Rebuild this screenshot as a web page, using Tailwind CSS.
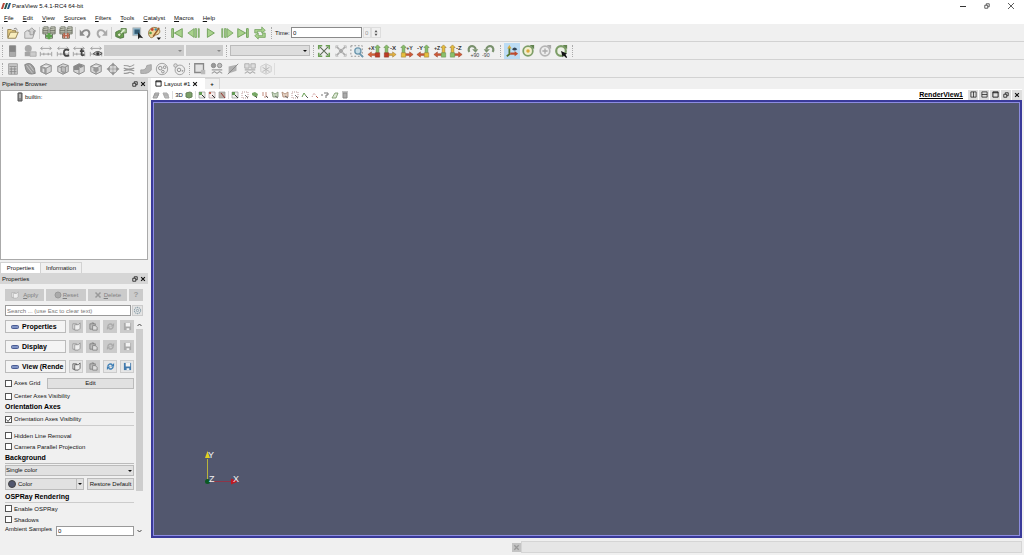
<!DOCTYPE html>
<html lang="en">
<head>
<meta charset="utf-8">
<title>ParaView 5.4.1-RC4 64-bit</title>
<script src="https://cdn.jsdelivr.net/npm/@tailwindcss/browser@4"></script>
</head>
<body class="flex h-screen flex-col overflow-hidden bg-[#f0f0f0] font-['Liberation_Sans',sans-serif] text-[6px] leading-[10px] text-[#111]">

<svg class="hidden" aria-hidden="true">
  <defs>
    <symbol id="open" viewBox="0 0 16 16"><path d="M2 4h4l1 1h4v8H2z" fill="#e8cf86" stroke="#8d7a4b"/><path d="M2 14l3-7h9l-3 7z" fill="#f8edbd" stroke="#8d7a4b"/><path d="M9 3q3-2 4 2" fill="none" stroke="#888"/></symbol>
    <symbol id="save" viewBox="0 0 16 16"><path d="M2 7l3-2h9l-3 9H2z" fill="#ddd" stroke="#999"/><path d="M6 6l4-4 4 4h-2v4H8V6z" fill="#d0d0d0" stroke="#999"/></symbol>
    <symbol id="server" viewBox="0 0 16 16"><g fill="#d2d6c6" stroke="#65695c"><path d="M1 3h6v6H1zM9 3h6v6H9z"/><path d="M1 5h6M1 7h6M9 5h6M9 7h6M1 2l1-1h5v2M9 2l1-1h5v2"/><path d="M4 9v5h8V9" fill="none"/></g></symbol>
    <symbol id="connect" viewBox="0 0 16 16"><use href="#server"/><path d="M8 8v7M4.500 11.500h7" stroke="#5da34c" stroke-width="3"/></symbol>
    <symbol id="disconnect" viewBox="0 0 16 16"><use href="#server"/><path d="M5 8h2v6H5zM9 8h2v6H9zM4 10h8v2H4z" fill="#b9664e"/></symbol>
    <symbol id="undo" viewBox="0 0 16 16"><path d="M4 8.500C7 3 13 4 13 8.500q0 3-3 4.500" fill="none" stroke="#8c8c8c" stroke-width="2.200"/><path d="M2 4v7h6z" fill="#8c8c8c"/></symbol>
    <symbol id="redo" viewBox="0 0 16 16"><path d="M12 8.500C9 3 3 4 3 8.500q0 3 3 4.500" fill="none" stroke="#aaa" stroke-width="2.200"/><path d="M14 4v7H8z" fill="#aaa"/></symbol>
    <symbol id="find" viewBox="0 0 16 16"><path d="M2 7l4-2 5 2v6l-4 1-5-2z" fill="#6ba24f" stroke="#496f3b"/><path d="M8 3h6v5H8z" fill="#a6c990" stroke="#557c43"/><path d="M6 10l6-6" stroke="#e6f2dc" stroke-width="1.500"/><circle cx="6" cy="10" r="2" fill="#e5efcf" stroke="#557c43"/></symbol>
    <symbol id="box" viewBox="0 0 16 16"><path d="M2 2h9v9H2z" fill="#8fb4c8" stroke="#bbb"/><path d="M4 4h6v5H4z" fill="#315a73"/><path d="M8 7l6 7-4-1-2 2z" fill="#222"/></symbol>
    <symbol id="palette" viewBox="0 0 16 16"><path d="M13 3C5-2-1 7 3 12c3 4 5-2 8-2 5-1 4-6 2-7z" fill="#f0d69a" stroke="#8b6c39"/><circle cx="6" cy="4" r="1.600" fill="#c54832"/><circle cx="10" cy="4" r="1.400" fill="#438cab"/><circle cx="4" cy="8" r="1.500" fill="#5a9b48"/><path d="M14 2L7 12" stroke="#955b2c" stroke-width="1.500"/><path d="M11 13h5l-2.500 3z" fill="#111"/></symbol>
    <symbol id="first" viewBox="0 0 16 16"><path d="M2 3h2v10H2zM14 3v10L5 8z" fill="#a9d28d" stroke="#6a9c54"/></symbol>
    <symbol id="prev" viewBox="0 0 16 16"><path d="M8 3v10L1 8zM9 3h2v10H9zM13 3h1v10h-1z" fill="#a9d28d" stroke="#6a9c54" stroke-width=".8"/></symbol>
    <symbol id="play" viewBox="0 0 16 16"><path d="M5 3l8 5-8 5z" fill="#a9d28d" stroke="#6a9c54"/></symbol>
    <symbol id="next" viewBox="0 0 16 16"><path d="M8 3v10l7-5zM5 3h2v10H5zM2 3h1v10H2z" fill="#a9d28d" stroke="#6a9c54" stroke-width=".8"/></symbol>
    <symbol id="last" viewBox="0 0 16 16"><path d="M12 3h2v10h-2zM2 3v10l9-5z" fill="#a9d28d" stroke="#6a9c54"/></symbol>
    <symbol id="loop" viewBox="0 0 16 16"><path d="M2 8V4h8V1l4 4-4 3V6H5v2zM14 8v5H6v2l-4-4 4-3v3h5V8z" fill="#a9d28d" stroke="#6a9c54" stroke-width=".8"/></symbol>

    <symbol id="legend" viewBox="0 0 16 16"><path d="M4 2h7v12H4z" fill="#858585" stroke="#8a8a8a"/><path d="M4 9h7v5H4z" fill="#aaa"/></symbol>
    <symbol id="shapes" viewBox="0 0 16 16"><circle cx="6" cy="5" r="4" fill="#aaa"/><path d="M2 9h7v5H2z" fill="#a4a4a4"/><path d="M8 9h7v5H8z" fill="#ccc" stroke="#aaa"/></symbol>
    <symbol id="range" viewBox="0 0 16 16"><path d="M2 5h12M4 3L2 5l2 2M12 3l2 2-2 2M1.500 9v5M14.500 9v5M2 11.500h12M5.500 10v3M10.500 10v3" fill="none" stroke="#999"/></symbol>
    <symbol id="range-c" viewBox="0 0 16 16"><use href="#range"/><path d="M15 7q-6-2-6 3t6 3" fill="none" stroke="#444" stroke-width="2"/></symbol>
    <symbol id="range-t" viewBox="0 0 16 16"><use href="#range"/><path d="M11 5v7q1 2 3 0M9 8h5" fill="none" stroke="#444" stroke-width="2"/></symbol>
    <symbol id="range-v" viewBox="0 0 16 16"><use href="#range"/><path d="M5 11q5-5 10 0-5 4-10 0z" fill="#bbb" stroke="#444"/><circle cx="10" cy="11" r="1.700" fill="#333"/></symbol>
    <symbol id="reset" viewBox="0 0 16 16"><path d="M3 3l10 10M13 3L3 13" stroke="#5e6b58" stroke-width="1.200"/><path d="M2 6V2h4M10 2h4v4M14 10v4h-4M6 14H2v-4" fill="none" stroke="#6ca055" stroke-width="1.800"/></symbol>
    <symbol id="zoomdata" viewBox="0 0 16 16"><path d="M3 3l3 3M13 3l-3 3M3 13l3-3M13 13l-3-3" stroke="#aaa" stroke-width="2"/><circle cx="8" cy="8" r="2.500" fill="#aaa"/><path d="M2 5V2h3M11 2h3v3M2 11v3h3M14 11v3h-3" fill="none" stroke="#bbb"/></symbol>
    <symbol id="zoombox" viewBox="0 0 16 16"><path d="M1 2h13v12H1z" fill="none" stroke="#888" stroke-dasharray="2 2"/><circle cx="9" cy="8" r="3.500" fill="#c6dce6" stroke="#6d97ae" stroke-width="1.500"/><path d="M11 11l4 4" stroke="#6d97ae" stroke-width="2"/></symbol>
    <symbol id="axis-r" viewBox="0 0 16 16"><path d="M12 1l3 3h-1.500v6h-3V4H9z" fill="#8ac06a" stroke="#638b4d" stroke-width=".7"/><path d="M10 11H5V9l-4 3 4 3v-2h5z" fill="#d8663b" stroke="#a5482a" stroke-width=".6"/><path d="M9.500 10h5v5h-5z" fill="#bd3c26" stroke="#8d3520" stroke-width=".6"/></symbol>
    <symbol id="axis-l" viewBox="0 0 16 16"><path d="M4 1l3 3H5.500v6h-3V4H1z" fill="#8ac06a" stroke="#638b4d" stroke-width=".7"/><path d="M6 11h5V9l4 3-4 3v-2H6z" fill="#e3b03d" stroke="#9d7833" stroke-width=".6"/><path d="M1.500 10h5v5h-5z" fill="#bd3c26" stroke="#8d3520" stroke-width=".6"/></symbol>
    <symbol id="axis-ly" viewBox="0 0 16 16"><path d="M4 1l3 3H5.500v6h-3V4H1z" fill="#8ac06a" stroke="#638b4d" stroke-width=".7"/><path d="M6 11h5V9l4 3-4 3v-2H6z" fill="#cf5a37" stroke="#9a4128" stroke-width=".6"/><path d="M1.500 10h5v5h-5z" fill="#e6bf3c" stroke="#9d7833" stroke-width=".6"/></symbol>
    <symbol id="axis-ry" viewBox="0 0 16 16"><path d="M12 1l3 3h-1.500v6h-3V4H9z" fill="#8ac06a" stroke="#638b4d" stroke-width=".7"/><path d="M10 11H5V9l-4 3 4 3v-2h5z" fill="#cf5a37" stroke="#9a4128" stroke-width=".6"/><path d="M9.500 10h5v5h-5z" fill="#e6bf3c" stroke="#9d7833" stroke-width=".6"/></symbol>
    <symbol id="axis-rz" viewBox="0 0 16 16"><path d="M12 1l3 3h-1.500v6h-3V4H9z" fill="#e6bf3c" stroke="#9d7833" stroke-width=".7"/><path d="M10 11H5V9l-4 3 4 3v-2h5z" fill="#cf5a37" stroke="#9a4128" stroke-width=".6"/><path d="M9.500 10h5v5h-5z" fill="#8ac06a" stroke="#638b4d" stroke-width=".6"/></symbol>
    <symbol id="axis-lz" viewBox="0 0 16 16"><path d="M4 1l3 3H5.500v6h-3V4H1z" fill="#e6bf3c" stroke="#9d7833" stroke-width=".7"/><path d="M6 11h5V9l4 3-4 3v-2H6z" fill="#cf5a37" stroke="#9a4128" stroke-width=".6"/><path d="M1.500 10h5v5h-5z" fill="#8ac06a" stroke="#638b4d" stroke-width=".6"/></symbol>
    <symbol id="plus-x" viewBox="0 0 16 16"><use href="#axis-r"/><text x="1" y="7" font-size="6" font-weight="bold" fill="#333">+X</text></symbol>
    <symbol id="minus-x" viewBox="0 0 16 16"><use href="#axis-l"/><text x="8" y="7" font-size="7" font-weight="bold" fill="#333">-X</text></symbol>
    <symbol id="plus-y" viewBox="0 0 16 16"><use href="#axis-ly"/><text x="7" y="7" font-size="6" font-weight="bold" fill="#333">+Y</text></symbol>
    <symbol id="minus-y" viewBox="0 0 16 16"><use href="#axis-ry"/><text x="1" y="7" font-size="7" font-weight="bold" fill="#333">-Y</text></symbol>
    <symbol id="plus-z" viewBox="0 0 16 16"><use href="#axis-rz"/><text x="1" y="7" font-size="6" font-weight="bold" fill="#333">+Z</text></symbol>
    <symbol id="minus-z" viewBox="0 0 16 16"><use href="#axis-lz"/><text x="8" y="7" font-size="7" font-weight="bold" fill="#333">-Z</text></symbol>
    <symbol id="rot-p" viewBox="0 0 16 16"><path d="M4 9a4 4 0 1 1 7-3" fill="none" stroke="#79916d" stroke-width="2.500"/><path d="M7 6h7l-3 4z" fill="#79916d"/><text x="5" y="15" font-size="6" fill="#444">+90</text></symbol>
    <symbol id="rot-m" viewBox="0 0 16 16"><path d="M12 9a4 4 0 1 0-7-3" fill="none" stroke="#79916d" stroke-width="2.500"/><path d="M2 6h7l-4 4z" fill="#79916d"/><text x="0" y="15" font-size="6" fill="#444">-90</text></symbol>
    <symbol id="orient" viewBox="0 0 16 16"><path d="M5 12V4M6 11l-4 3" stroke="#55772f" stroke-width="2"/><path d="M2.500 5L5 1l2.500 4z" fill="#d4aa3b"/><path d="M6 11h6" stroke="#bd4c2e" stroke-width="2.500"/><path d="M11 8l4 3-4 3z" fill="#bd4c2e"/><path d="M8 6q3-4 6 0-3 3-6 0z" fill="#345"/></symbol>
    <symbol id="center" viewBox="0 0 16 16"><circle cx="8" cy="8" r="5.500" fill="#f1efcf" stroke="#7d9e68" stroke-width="2"/><circle cx="8" cy="8" r="2" fill="#dca83c"/><path d="M10 1h5v5z" fill="#62834e"/></symbol>
    <symbol id="center-r" viewBox="0 0 16 16"><circle cx="8" cy="8" r="5.500" fill="#eee" stroke="#b5b5b5" stroke-width="2"/><path d="M8 5v6M5 8h6" stroke="#aaa" stroke-width="1.500"/><path d="M10 1h5v5z" fill="#aaa"/></symbol>
    <symbol id="pick" viewBox="0 0 16 16"><circle cx="8" cy="8" r="5.500" fill="#edf1e6" stroke="#7d9e68" stroke-width="2.500"/><path d="M10 1h5v5z" fill="#62834e"/><path d="M8 8l7 3-2 1 2 3-1 1-3-3-1 2z" fill="#111"/></symbol>

    <symbol id="calc" viewBox="0 0 16 16"><path d="M3 2h10v12H3z" fill="#ccc" stroke="#999"/><path d="M4 5h8M4 8h8M4 11h8M6 6v8M10 6v8" stroke="#888"/></symbol>
    <symbol id="contour" viewBox="0 0 16 16"><path d="M2 3q7-4 11 4l1 6q-9 3-11-5z" fill="#9c9c9c" stroke="#808080"/><path d="M4 4l7 9M7 3l5 7" stroke="#ccc"/></symbol>
    <symbol id="cube" viewBox="0 0 16 16"><path d="M2 5l6-3 6 2v7l-6 3-6-3zM2 5l6 2 6-3M8 7v7" fill="#d5d5d5" stroke="#858585"/></symbol>
    <symbol id="clip" viewBox="0 0 16 16"><use href="#cube"/><path d="M2 5l6 2v7l-6-3z" fill="#9b9b9b"/><path d="M4 7l2 1v4l-2-1z" fill="#ddd"/></symbol>
    <symbol id="slice" viewBox="0 0 16 16"><use href="#cube"/><path d="M6 5l5 1v6l-5-1z" fill="#bbb" stroke="#888"/></symbol>
    <symbol id="thresh" viewBox="0 0 16 16"><use href="#cube"/><path d="M2 5l6-3 4 1v3H8v3H2z" fill="#888"/></symbol>
    <symbol id="subset" viewBox="0 0 16 16"><use href="#cube"/><path d="M5 7l3-1 3 1v3l-3 2-3-2z" fill="#999"/></symbol>
    <symbol id="glyph" viewBox="0 0 16 16"><circle cx="8" cy="8" r="5" fill="#d5d5d5" stroke="#999"/><path d="M8 2v12M2 8h12M8 1L6 4h4zM8 15l-2-3h4zM1 8l3-2v4zM15 8l-3-2v4z" fill="#8c8c8c" stroke="#999" stroke-width=".7"/></symbol>
    <symbol id="stream" viewBox="0 0 16 16"><path d="M2 4q5 0 6 1t6-2M2 7q5 2 12 0M2 10q5-2 12 0M2 13q5 0 6-1t6 2" fill="none" stroke="#999" stroke-width="1.300"/></symbol>
    <symbol id="warp" viewBox="0 0 16 16"><path d="M2 9q6 1 7-5l5-1v6q-3 5-12 4z" fill="#b5b5b5" stroke="#a0a0a0"/></symbol>
    <symbol id="group" viewBox="0 0 16 16"><circle cx="8" cy="8" r="6.500" fill="#eee" stroke="#999"/><circle cx="6" cy="7" r="2" fill="none" stroke="#888"/><circle cx="11" cy="6" r="1.500" fill="none" stroke="#888"/><circle cx="9" cy="11" r="1.500" fill="none" stroke="#888"/></symbol>
    <symbol id="extract" viewBox="0 0 16 16"><circle cx="9" cy="9" r="5.500" fill="#eee" stroke="#999"/><circle cx="4" cy="4" r="2" fill="#ddd" stroke="#999"/><circle cx="8" cy="9" r="2" fill="none" stroke="#888"/><circle cx="12" cy="10" r="1" fill="#999"/></symbol>
    <symbol id="select" viewBox="0 0 16 16"><path d="M2 2h10v10H2z" fill="#e2e2e2" stroke="#888" stroke-width="1.500"/><path d="M9 9h5v5H9z" fill="#bbb"/></symbol>
    <symbol id="hist" viewBox="0 0 16 16"><circle cx="4" cy="4" r="2.500" fill="#999" stroke="#888"/><circle cx="11" cy="4" r="2.500" fill="#bbb" stroke="#888"/><path d="M2 9h12M2 13l3-2 3 2 3-2 3 2" fill="none" stroke="#999" stroke-width="1.300"/></symbol>
    <symbol id="plotline" viewBox="0 0 16 16"><path d="M3 5l9-2v7l-9 3z" fill="#b0b0b0"/><path d="M2 14L14 2" stroke="#888"/></symbol>
    <symbol id="plotsel" viewBox="0 0 16 16"><path d="M2 2h5v5H2zM9 2h5v5H9z" fill="#ddd" stroke="#aaa"/><path d="M2 9h12M2 13l3-2 3 2 3-2 3 2" fill="none" stroke="#aaa" stroke-width="1.300"/></symbol>
    <symbol id="probe" viewBox="0 0 16 16"><path d="M2 5l6-3 6 3v6l-6 3-6-3z" fill="#e9e9e9" stroke="#ccc"/><path d="M8 3v10M4 6l8 5M12 6l-8 5" stroke="#b5b5b5"/></symbol>

    <symbol id="v-cam" viewBox="0 0 10 10"><path d="M2 8l2-5h4L6 8zM3 5h5" fill="#bbb" stroke="#999"/></symbol>
    <symbol id="v-cam2" viewBox="0 0 10 10"><path d="M2 3h4l2 5H4zM3 5h5" fill="#bbb" stroke="#aaa"/></symbol>
    <symbol id="v-pic" viewBox="0 0 10 10"><path d="M2 3l4-1 2 1v4L5 8 2 7z" fill="#7ba068" stroke="#668058"/></symbol>
    <symbol id="v-s1" viewBox="0 0 10 10"><path d="M2 2h6v6H2z" fill="#edf0ea" stroke="#999" stroke-width=".7"/><path d="M2 2h3v3H2z" fill="#649b56"/><path d="M5 5l3 3" stroke="#333"/></symbol>
    <symbol id="v-s2" viewBox="0 0 10 10"><path d="M2 2h6v6H2z" fill="#f6eded" stroke="#a99" stroke-width=".7"/><path d="M2 2h2v2H2z" fill="#bc6958"/><path d="M5 5l3 3" stroke="#333"/></symbol>
    <symbol id="v-s3" viewBox="0 0 10 10"><path d="M2 2h6v6H2z" fill="#b9b3a8" stroke="#999" stroke-width=".7"/><path d="M4 3l4 5" stroke="#933"/></symbol>
    <symbol id="v-box" viewBox="0 0 10 10"><path d="M2 2h6v6H2z" fill="none" stroke="#b99" stroke-dasharray="1 1"/><path d="M5 5l3 3" stroke="#777"/></symbol>
    <symbol id="v-blob" viewBox="0 0 10 10"><path d="M2 3l3-1 3 2-1 3H5L2 5z" fill="#76a765"/><path d="M5 6l2 2" stroke="#555"/></symbol>
    <symbol id="v-dots" viewBox="0 0 10 10"><path d="M2 3h5M2 5h6M4 7h4" stroke="#c08a7d" stroke-dasharray="2 1"/><path d="M6 6l2 2" stroke="#555"/></symbol>
    <symbol id="v-poly" viewBox="0 0 10 10"><path d="M2 2l3 2 3-2v5H3z" fill="#c8d8c0" stroke="#7d9373" stroke-width=".8"/><path d="M5 6l3 2" stroke="#666"/></symbol>
    <symbol id="v-poly2" viewBox="0 0 10 10"><path d="M2 2l3 2 3-2v5H3z" fill="#e4d2c4" stroke="#a8846f" stroke-width=".8"/><path d="M5 6l3 2" stroke="#666"/></symbol>
    <symbol id="v-tri" viewBox="0 0 10 10"><path d="M2 7l2-4 2 3" fill="none" stroke="#6ba057"/><path d="M6 6l2 2" stroke="#555"/></symbol>
    <symbol id="v-tri2" viewBox="0 0 10 10"><path d="M2 7l2-4 2 3" fill="none" stroke="#c99" stroke-dasharray="1 1"/><path d="M6 6l2 2" stroke="#b85b4b"/></symbol>
    <symbol id="v-q" viewBox="0 0 10 10"><path d="M1 5h2M4 3h4v2H6v3" fill="none" stroke="#777"/></symbol>
    <symbol id="v-pen" viewBox="0 0 10 10"><path d="M2 8l3-5h3L6 8z" fill="#dde8d6" stroke="#71935f" stroke-width=".8"/></symbol>
    <symbol id="v-trash" viewBox="0 0 10 10"><path d="M3 3h4v5H3zM2 2h6" fill="#aaa" stroke="#888"/></symbol>

    <symbol id="restore" viewBox="0 0 8 8"><path d="M3 3V1h4v4H5" fill="none" stroke="currentColor"/><path d="M1 3h4v4H1z" fill="none" stroke="currentColor"/></symbol>
    <symbol id="close" viewBox="0 0 8 8"><path d="M1.500 1.500l5 5M6.500 1.500l-5 5" stroke="currentColor" stroke-width="1.500"/></symbol>
    <symbol id="max" viewBox="0 0 8 8"><path d="M1 1h6v6H1zM1 2h6" fill="none" stroke="currentColor"/></symbol>
    <symbol id="splith" viewBox="0 0 8 8"><path d="M1 1h6v6H1zM4 1v6" fill="none" stroke="currentColor" stroke-width=".8"/></symbol>
    <symbol id="splitv" viewBox="0 0 8 8"><path d="M1 1h6v6H1zM1 4h6" fill="none" stroke="currentColor" stroke-width=".8"/></symbol>

    <symbol id="copy" viewBox="0 0 10 10"><path d="M1 2h4v6H1z" fill="#eee" stroke="currentColor" stroke-width=".8"/><path d="M3 3h4l2-2v6L7 9H3z" fill="#eee" stroke="currentColor" stroke-width=".8"/></symbol>
    <symbol id="paste" viewBox="0 0 10 10"><path d="M1 2h6v6H1zM3 1h2v1" fill="#bbb" stroke="currentColor" stroke-width=".8"/><path d="M4 4h3l2 2v3H4z" fill="#ddd" stroke="currentColor" stroke-width=".8"/></symbol>
    <symbol id="refresh" viewBox="0 0 10 10"><path d="M2 5a3 3 0 0 1 5-2M8 5a3 3 0 0 1-5 2" fill="none" stroke="currentColor" stroke-width="1.600"/><path d="M9 1v4H5zM1 9V5h4z" fill="currentColor"/></symbol>
    <symbol id="disk" viewBox="0 0 10 10"><path d="M1 1h8v8H1z" fill="currentColor"/><path d="M3 1h5v4H3zM4 7h3v2H4z" fill="#f2f2f2"/></symbol>
    <symbol id="gear" viewBox="0 0 10 10"><circle cx="5" cy="5" r="3.500" fill="none" stroke="#8fa3ad" stroke-width="1.200" stroke-dasharray="1.500 .7"/><circle cx="5" cy="5" r="1.300" fill="none" stroke="#8fa3ad"/></symbol>
    <symbol id="minus" viewBox="0 0 8 4"><rect x=".5" y=".5" width="7" height="3" rx="1" fill="#7f93c4" stroke="#4b5c94"/></symbol>
  </defs>
</svg>

<header class="bg-white">
  <div class="flex h-3 items-center">
    <svg class="ml-px h-2 w-[10px]" viewBox="0 0 10 8"><path d="M2 1h2L2 7H0z" fill="#b5493a"/><path d="M5 1h2L5 7H3z" fill="#27564c"/><path d="M8 1h2L8 7H6z" fill="#235a8a"/></svg>
    <h1 class="ml-px flex-1">ParaView 5.4.1-RC4 64-bit</h1>
    <div class="flex gap-4 pr-[9px] text-[#333]">
      <button aria-label="Minimize"><svg class="size-2" viewBox="0 0 8 8"><path d="M1 4.500h6" stroke="currentColor"/></svg></button>
      <button aria-label="Restore" class="flex items-center p-px"><svg class="size-[6px]"><use href="#restore"/></svg></button>
      <button aria-label="Close"><svg class="size-2" viewBox="0 0 8 8"><path d="M1 1l6 6M7 1L1 7" stroke="currentColor" stroke-width=".8"/></svg></button>
    </div>
  </div>
  <nav class="flex h-3 items-center gap-[9px] pl-1">
    <button><u>F</u>ile</button><button><u>E</u>dit</button><button><u>V</u>iew</button><button><u>S</u>ources</button><button><u>F</u>ilters</button><button><u>T</u>ools</button><button><u>C</u>atalyst</button><button><u>M</u>acros</button><button><u>H</u>elp</button>
  </nav>
</header>

<section aria-label="Toolbars">
  <div class="flex h-[18px] items-center border-b border-[#d2d2d2]">
    <i class="ml-[2px] mr-[2px] h-3 border-l border-dotted border-[#aaa]"></i>
    <div class="flex w-[33px] justify-between" data-icons="open save"></div>
    <i class="mx-px h-3 border-l border-[#d0d0d0]"></i>
    <div class="flex w-[33px] justify-between" data-icons="connect disconnect"></div>
    <i class="mx-px h-3 border-l border-[#d0d0d0]"></i>
    <div class="flex w-[33px] justify-between" data-icons="undo redo"></div>
    <i class="mx-px h-3 border-l border-[#d0d0d0]"></i>
    <div class="flex w-[49px] justify-between" data-icons="find box palette"></div>
    <i class="mx-[3px] h-3 border-l border-dotted border-[#aaa]"></i>
    <div class="flex w-[99px] justify-between" data-icons="first prev play next last loop"></div>
    <i class="mx-[3px] h-3 border-l border-dotted border-[#aaa]"></i>
    <label for="time" class="w-4">Time:</label>
    <input id="time" value="0" class="h-[11px] w-[71px] border border-[#8a8a8a] bg-white px-px">
    <input aria-label="Time step" value="0" disabled class="ml-px h-[11px] w-2 border border-[#ddd] px-px text-[#999]">
    <button aria-label="Step" class="flex h-[11px] w-[10px] items-center justify-center border border-[#ddd]"><svg class="size-[6px]" viewBox="0 0 8 8"><path d="M4 0l2 3H2zM4 8l2-3H2z" fill="#555"/></svg></button>
  </div>
  <div class="flex h-[18px] items-center border-b border-[#d2d2d2]">
    <i class="ml-[2px] mr-[2px] h-3 border-l border-dotted border-[#aaa]"></i>
    <div class="flex w-[99px] justify-between" data-icons="legend shapes range range-c range-t range-v"></div>
    <button aria-label="Coloring" disabled class="flex h-[11px] w-[80px] items-center justify-end bg-[#ccc] pr-[2px]"><svg class="size-1" viewBox="0 0 4 4"><path d="M0 1h4L2 3z" fill="#888"/></svg></button>
    <button aria-label="Component" disabled class="ml-[2px] flex h-[11px] w-[37px] items-center justify-end bg-[#ccc] pr-[2px]"><svg class="size-1" viewBox="0 0 4 4"><path d="M0 1h4L2 3z" fill="#888"/></svg></button>
    <i class="mx-[3px] h-3 border-l border-dotted border-[#aaa]"></i>
    <button aria-label="Representation" class="flex h-[11px] w-[80px] items-center justify-end border border-[#bbb] bg-[#ddd] pr-[2px]"><svg class="size-1" viewBox="0 0 4 4"><path d="M0 1h4L2 3z" fill="#111"/></svg></button>
    <i class="ml-[3px] mr-[2px] h-3 border-l border-dotted border-[#aaa]"></i>
    <div class="flex w-[181px] justify-between" data-icons="reset zoomdata zoombox plus-x minus-x plus-y minus-y plus-z minus-z rot-p rot-m"></div>
    <i class="mx-[3px] h-3 border-l border-dotted border-[#aaa]"></i>
    <div class="flex w-[65px] justify-between" data-icons="orient center center-r pick" data-on="orient"></div>
    <i class="ml-[3px] h-3 border-l border-dotted border-[#aaa]"></i>
  </div>
  <div class="flex h-[18px] items-center border-b border-[#d2d2d2]">
    <i class="ml-[2px] mr-[2px] h-3 border-l border-dotted border-[#aaa]"></i>
    <div class="flex w-[182px] justify-between" data-icons="calc contour clip slice thresh subset glyph stream warp group extract"></div>
    <i class="mx-[2px] h-3 border-l border-dotted border-[#aaa]"></i>
    <div class="flex w-[82px] justify-between" data-icons="select hist plotline plotsel probe"></div>
    <i class="h-3 border-l border-[#ddd]"></i>
  </div>
</section>

<main class="flex min-h-0 flex-1 gap-[3px] pr-[2px]">
  <aside class="flex w-[148px] shrink-0 flex-col">
    <div class="flex h-3 items-center bg-[#d6d6d6] pl-[2px] pr-[2px]">
      <h2 class="flex-1">Pipeline Browser</h2>
      <div class="flex gap-[2px]">
        <button aria-label="Float"><svg class="size-[6px]"><use href="#restore"/></svg></button>
        <button aria-label="Close"><svg class="size-[6px]"><use href="#close"/></svg></button>
      </div>
    </div>
    <div class="min-h-0 flex-1 border border-[#aaa] bg-white pl-4 pt-px">
      <div class="flex items-center gap-[2px]"><svg class="h-[10px] w-[6px]" viewBox="0 0 6 10"><path d="M3 0v1" stroke="#999"/><path d="M1 1h4v8H1z" fill="#888" stroke="#555"/><path d="M2 3h2M2 5h2" stroke="#ddd"/></svg>builtin:</div>
    </div>
    <div class="mt-[2px] flex h-[11px]">
      <button class="w-[41px] border-x border-t border-[#d2d2d2] bg-white">Properties</button>
      <button class="w-[41px] border-r border-t border-[#d2d2d2]">Information</button>
    </div>
    <div class="flex h-[11px] items-center bg-[#d6d6d6] pl-[2px] pr-[2px]">
      <h2 class="flex-1">Properties</h2>
      <div class="flex gap-[2px]">
        <button aria-label="Float"><svg class="size-[6px]"><use href="#restore"/></svg></button>
        <button aria-label="Close"><svg class="size-[6px]"><use href="#close"/></svg></button>
      </div>
    </div>
    <div class="flex h-[254px] flex-col pl-[5px] pr-[5px] pt-[5px]">
      <div class="flex h-3 gap-[2px] text-[#808080]">
        <button class="flex flex-1 items-center justify-center gap-1 bg-[#cbcbcb]"><svg class="size-2 text-[#aaa]"><use href="#copy"/></svg><span><u>A</u>pply</span></button>
        <button class="flex flex-1 items-center justify-center gap-px bg-[#cbcbcb]"><svg class="size-2" viewBox="0 0 8 8"><circle cx="4" cy="4" r="3" fill="#aaa" stroke="#999"/></svg><span><u>R</u>eset</span></button>
        <button class="flex flex-1 items-center justify-center gap-[2px] bg-[#cbcbcb]"><svg class="size-2 text-[#999]"><use href="#close"/></svg><span><u>D</u>elete</span></button>
        <button class="w-[14px] bg-[#cbcbcb] text-[8px] font-bold text-[#999]">?</button>
      </div>
      <div class="mt-1 flex h-[11px] gap-px">
        <input aria-label="Search" placeholder="Search ... (use Esc to clear text)" class="min-w-0 flex-1 border border-[#999] bg-white px-px placeholder:text-[#777]">
        <button aria-label="Advanced" class="flex w-[11px] items-center justify-center border border-[#ccc] bg-[#e4e4e4]"><svg class="size-[9px]"><use href="#gear"/></svg></button>
      </div>
      <div class="mt-1 flex gap-[2px]">
        <div class="min-w-0 flex-1">
          <div class="flex flex-col gap-[7px]">
            <div class="flex h-[13px] gap-[3px]" data-section="Properties"></div>
            <div class="flex h-[13px] gap-[3px]" data-section="Display"></div>
            <div class="flex h-[13px] gap-[3px]" data-section="View (Rende"></div>
          </div>
          <div class="mt-1 flex h-3 items-center"><label class="flex w-[42px] items-center gap-[2px]"><input type="checkbox" class="size-[7px] appearance-none border border-[#555] bg-white">Axes Grid</label><button class="h-[11px] flex-1 border border-[#bbb] bg-[#e1e1e1] leading-[9px]">Edit</button></div>
          <label class="mt-px flex h-3 items-center gap-[2px]"><input type="checkbox" class="size-[7px] appearance-none border border-[#555] bg-white">Center Axes Visibility</label>
          <h3 class="flex h-[11px] items-center border-b border-[#bbb] text-[7px] font-bold text-black">Orientation Axes</h3>
          <label class="flex h-3 items-center gap-[2px]"><span class="relative flex"><input type="checkbox" checked class="size-[7px] appearance-none border border-[#555] bg-white"><svg class="pointer-events-none absolute inset-0 size-[7px]" viewBox="0 0 7 7"><path d="M1.500 3.500l1.500 2 3-4" fill="none" stroke="#222" stroke-width=".8"/></svg></span>Orientation Axes Visibility</label>
          <hr class="border-[#ccc]">
          <label class="mt-1 flex h-[11px] items-center gap-[2px]"><input type="checkbox" class="size-[7px] appearance-none border border-[#555] bg-white">Hidden Line Removal</label>
          <label class="flex h-[11px] items-center gap-[2px]"><input type="checkbox" class="size-[7px] appearance-none border border-[#555] bg-white">Camera Parallel Projection</label>
          <h3 class="flex h-3 items-center border-b border-[#bbb] text-[7px] font-bold text-black">Background</h3>
          <div class="relative mt-px flex">
            <select aria-label="Background mode" class="h-[11px] w-full appearance-none border border-[#bbb] bg-[#e1e1e1] leading-[9px]"><option>Single color</option></select>
            <svg class="pointer-events-none absolute right-[2px] top-[4px] size-1" viewBox="0 0 4 4"><path d="M0 1h4L2 3z" fill="#111"/></svg>
          </div>
          <div class="mt-[2px] flex h-3 gap-[3px]">
            <button class="flex flex-1 items-center gap-[2px] border border-[#bbb] bg-[#e1e1e1] pl-[2px]"><span class="size-2 rounded-full border border-[#444] bg-[#53586f]"></span><span class="flex-1 text-left">Color</span><span class="flex h-full w-[7px] items-center justify-center border-l border-[#bbb]"><svg class="size-1" viewBox="0 0 4 4"><path d="M0 1h4L2 3z" fill="#111"/></svg></span></button>
            <button class="w-[47px] whitespace-nowrap border border-[#bbb] bg-[#e1e1e1]">Restore Default</button>
          </div>
          <h3 class="mt-[2px] flex h-[11px] items-center border-b border-[#ccc] text-[7px] font-bold text-black">OSPRay Rendering</h3>
          <label class="flex h-[11px] items-center gap-[2px]"><input type="checkbox" class="size-[7px] appearance-none border border-[#555] bg-white">Enable OSPRay</label>
          <label class="flex h-[11px] items-center gap-[2px]"><input type="checkbox" class="size-[7px] appearance-none border border-[#555] bg-white">Shadows</label>
          <div class="flex h-[11px]"><label for="ambient" class="w-[51px] leading-[9px]">Ambient Samples</label><input id="ambient" value="0" class="mt-px min-w-0 flex-1 border border-[#999] bg-white px-px"></div>
        </div>
        <div class="flex w-[7px] flex-col items-center">
          <svg class="h-[9px] w-[5px]" viewBox="0 0 5 9"><path d="M.5 6l2-2 2 2" fill="none" stroke="#444"/></svg>
          <div class="h-[162px] w-full bg-[#cdcdcd]"></div>
          <div class="flex-1"></div>
          <svg class="h-[9px] w-[5px]" viewBox="0 0 5 9"><path d="M.5 3l2 2 2-2" fill="none" stroke="#444"/></svg>
        </div>
      </div>
    </div>
  </aside>

  <section class="flex min-w-0 flex-1 flex-col">
    <div class="flex h-[11px]">
      <div class="flex w-[54px] items-center gap-[2px] bg-white pl-1"><svg class="size-[7px]"><use href="#max"/></svg><span class="whitespace-nowrap">Layout #1</span><button aria-label="Close layout"><svg class="size-[6px]"><use href="#close"/></svg></button></div>
      <button class="w-[15px] border-r border-t border-[#d8d8d8] font-bold">+</button>
    </div>
    <div class="flex h-[11px] items-center bg-white">
      <div class="flex" data-view="v-cam v-cam2"></div>
      <i class="mx-px h-2 border-l border-[#ddd]"></i>
      <button class="w-[10px]">3D</button>
      <div class="flex" data-view="v-pic"></div>
      <i class="mx-px h-2 border-l border-[#ddd]"></i>
      <div class="flex" data-view="v-s1 v-s2 v-s3"></div>
      <i class="mx-px h-2 border-l border-[#ddd]"></i>
      <div class="flex" data-view="v-s1 v-box v-blob v-dots v-poly v-poly2 v-box v-tri v-tri2 v-q v-pen v-trash"></div>
      <a href="#" class="ml-auto mr-[5px] text-[7px] font-bold text-black underline">RenderView1</a>
      <div class="flex gap-px">
        <button aria-label="Split horizontal" class="flex size-[10px] items-center justify-center bg-[#dedede]"><svg class="size-[7px]"><use href="#splith"/></svg></button>
        <button aria-label="Split vertical" class="flex size-[10px] items-center justify-center bg-[#dedede]"><svg class="size-[7px]"><use href="#splitv"/></svg></button>
        <button aria-label="Maximize" class="flex size-[10px] items-center justify-center bg-[#dedede]"><svg class="size-[7px]"><use href="#max"/></svg></button>
        <button aria-label="Float view" class="flex size-[10px] items-center justify-center bg-[#dedede]"><svg class="size-[6px]"><use href="#restore"/></svg></button>
        <button aria-label="Close view" class="flex size-[10px] items-center justify-center bg-[#dedede]"><svg class="size-[6px]"><use href="#close"/></svg></button>
      </div>
    </div>
    <div class="relative flex-1 border-2 border-[#3a3a99] bg-[#52576e] shadow-[inset_0_0_0_1px_#8c8ce0]">
      <svg class="absolute bottom-[47px] left-[49px] h-[40px] w-[40px]" viewBox="0 0 40 40" font-family="Liberation Sans" font-size="9" fill="#f2f2f2">
        <path d="M5.500 32V10" stroke="#b9b43c"/><path d="M5.500 2L3 9h5z" fill="#e0d21f"/>
        <path d="M6 32.500h24" stroke="#8d3548"/><path d="M29 29.500l7 3-7 3z" fill="#c01820"/>
        <circle cx="5.500" cy="32.500" r="2.500" fill="#0c5a22"/>
        <text x="6" y="9">Y</text><text x="7" y="33">Z</text><text x="31" y="33">X</text>
      </svg>
    </div>
  </section>
</main>

<footer class="flex h-[17px] items-center justify-end pr-[2px] pt-px">
  <button aria-label="Abort" class="flex size-[9px] items-center justify-center bg-[#c4c4c4] text-[#999]"><svg class="size-[7px]"><use href="#close"/></svg></button>
  <div role="progressbar" aria-label="Progress" class="h-3 w-[49%] border border-[#d5d5d5] bg-[#e6e6e6]"></div>
</footer>

<script>
  const icon = (id, cls) => `<svg class="${cls}"><use href="#${id}"/></svg>`;
  document.querySelectorAll('[data-icons]').forEach(g => {
    g.innerHTML = g.dataset.icons.split(' ').map(id =>
      `<button aria-label="${id}" class="${g.dataset.on === id ? 'size-4 bg-[#bcdcf4] p-px' : 'size-4 p-px'}">${icon(id, 'size-[14px]')}</button>`).join('');
  });
  document.querySelectorAll('[data-view]').forEach(g => {
    g.innerHTML = g.dataset.view.split(' ').map(id =>
      `<button aria-label="${id.slice(2)}" class="size-[10px]">${icon(id, 'size-[10px]')}</button>`).join('');
  });
  document.querySelectorAll('[data-section]').forEach((g, i) => {
    const on = i === 2;
    const tint = { copy: on ? 'text-[#444]' : 'text-[#888]', paste: 'text-[#777]', refresh: on ? 'text-[#3f7fb5]' : 'text-[#aaa]', disk: on ? 'text-[#4179ad]' : 'text-[#aaa]' };
    g.innerHTML = `<button class="flex w-[61px] items-center gap-[3px] whitespace-nowrap border border-[#bbb] bg-[#f4f4f4] pl-[5px] text-[7px] font-bold text-black"><svg class="h-1 w-2 shrink-0"><use href="#minus"/></svg><span>${g.dataset.section}</span></button>` +
      ['copy', 'paste', 'refresh', 'disk'].map(n =>
        `<button aria-label="${n}" class="${on && n !== 'paste' ? 'flex w-[14px] items-center justify-center border border-[#ccc] bg-[#e6e6e6]' : 'flex w-[14px] items-center justify-center bg-[#cbcbcb]'}"><span class="${tint[n]}">${icon(n, 'size-[9px]')}</span></button>`).join('');
  });
</script>
</body>
</html>
